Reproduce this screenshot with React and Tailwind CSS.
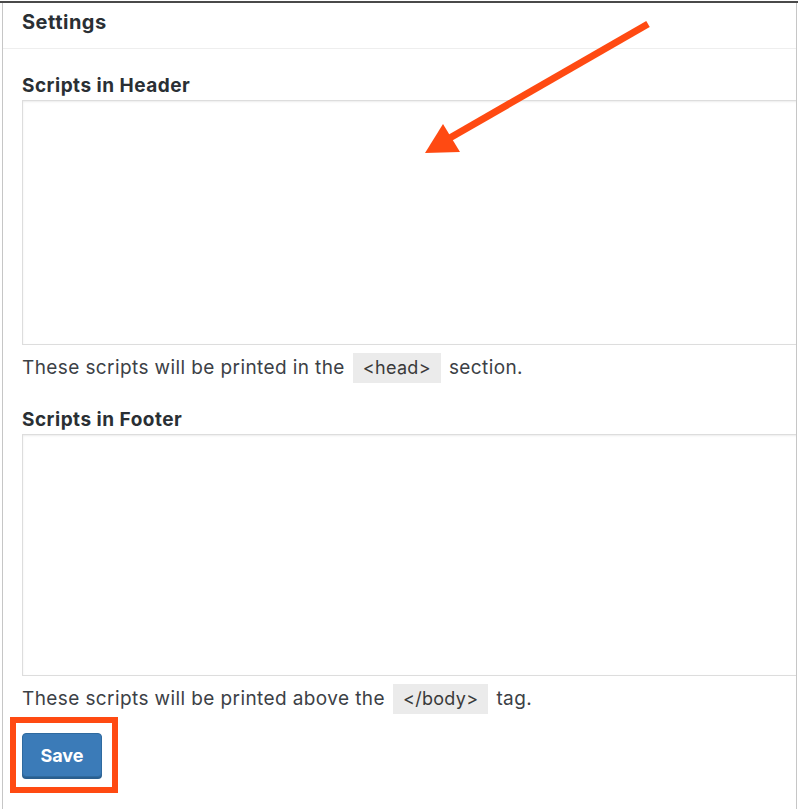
import React from "react";

const fields = [
    {
        label: "Scripts in Header",
        id: "header",
        height: "h-[245px]",
        before: "These scripts will be printed in the",
        code: "<head>",
        after: "section.",
    },
    {
        label: "Scripts in Footer",
        id: "footer",
        height: "h-[242px]",
        before: "These scripts will be printed above the",
        code: "</body>",
        after: "tag.",
    },
];

function Arrow() {
    return (
        <svg
            className="pointer-events-none absolute left-0 top-0"
            width="798"
            height="809"
            viewBox="0 0 798 809"
        >
            <line
                x1="648"
                y1="24"
                x2="448"
                y2="139"
                stroke="#ff4a12"
                strokeWidth="7"
            />
            <polygon points="425,153 443,124 460,152" fill="#ff4a12" />
        </svg>
    );
}

export default function App() {
    return (
        <div className="relative h-[809px] w-[798px] overflow-hidden bg-white font-['Inter',sans-serif] text-[#3c4146]">
            <div className="mt-[1px] h-[2px] bg-[#4a4a4a]" />
            <div className="ml-[2px] h-full w-[795px] overflow-hidden border-x border-[#c6c6c6]">
                <div className="h-[46px] border-b border-[#eeeeee] pl-[19px] pt-[7px]">
                    <h2 className="text-[20px] font-bold leading-[24px] tracking-[0.5px] text-[#2a2f34]">
                        Settings
                    </h2>
                </div>

                <div className="pl-[19px]">
                    {fields.map((field) => (
                        <div key={field.id} className="pt-[25px]">
                            <label
                                htmlFor={field.id}
                                className="block text-[19px] font-bold leading-[24px] tracking-[0.5px] text-[#2a2f34]"
                            >
                                {field.label}
                            </label>
                            <textarea
                                id={field.id}
                                className={`mt-[2px] block w-[820px] resize-none border border-[#dddddd] bg-white shadow-[inset_0_1px_2px_rgba(0,0,0,0.08)] outline-none ${field.height}`}
                            />
                            <p className="mt-[8px] flex h-[30px] items-center text-[19px] leading-[24px] tracking-[0.4px]">
                                {field.before}
                                <code className="mx-[8px] flex h-[30px] items-center bg-[#ebebeb] px-[10px] font-['Inter',sans-serif] text-[18px] tracking-[0.3px] text-[#3a3a3a]">
                                    {field.code}
                                </code>
                                {field.after}
                            </p>
                        </div>
                    ))}

                    <div className="-ml-[12px] mt-[3px] inline-block border-[6px] border-[#ff4a12] pb-[10px] pl-[6px] pr-[10px] pt-[10px]">
                        <button
                            type="button"
                            className="h-[44px] w-[80px] rounded-[4px] border border-[#2f6a9f] bg-[#3b7bb8] text-[18px] font-bold text-white shadow-[0_2px_0_#2a5f8f]"
                        >
                            Save
                        </button>
                    </div>
                </div>
            </div>
            <Arrow />
        </div>
    );
}
